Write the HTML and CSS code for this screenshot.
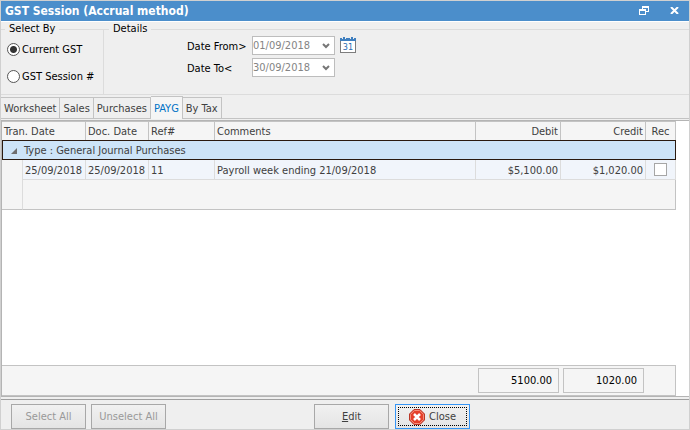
FILE: index.html
```html
<!DOCTYPE html>
<html lang="en">

<head>
    <meta charset="UTF-8">
    <meta name="viewport" content="width=device-width, initial-scale=1.0">
    <title>GST Session (Accrual method)</title>
    <link rel="stylesheet" href="styles.css">
</head>

<body>
    <div class="window">
        <header class="title-bar">
            <h1 class="title">GST Session (Accrual method)</h1>
            <button type="button" class="title-button" aria-label="Restore">
                <svg width="10" height="9" viewBox="0 0 10 9" fill="none" stroke="#fff" shape-rendering="crispEdges">
                    <path d="M3.5 3V.5h6v5H7M3 1.5h7" />
                    <path d="M.5 3.5h6v5h-6zM0 4.5h7" />
                </svg>
            </button>
            <button type="button" class="title-button" aria-label="Close window">
                <svg width="9" height="7" viewBox="0 0 9 7" stroke="#fff" stroke-width="2">
                    <path d="M1 0l7 7M8 0L1 7" />
                </svg>
            </button>
        </header>

        <form class="filters">
            <fieldset class="group select-by">
                <legend>Select By</legend>
                <label class="radio"><input type="radio" name="selectBy" checked> Current GST</label>
                <label class="radio"><input type="radio" name="selectBy"> GST Session #</label>
            </fieldset>
            <fieldset class="group details">
                <legend>Details</legend>
                <div class="date-grid">
                    <label for="dateFrom">Date From&gt;</label>
                    <select id="dateFrom" class="date-select" disabled>
                        <option>01/09/2018</option>
                    </select>
                    <button type="button" class="calendar-button" aria-label="Pick dates">
                        <svg width="16" height="17" viewBox="0 0 16 17">
                            <path d="M.5 3.5h15v12H.5z" fill="#fff" stroke="#7d7d7d" shape-rendering="crispEdges" />
                            <path d="M0 1h2v1h1V0h2v2h1V1h4v1h1V0h2v2h1V1h2v3H0z" fill="#3f7fbf" shape-rendering="crispEdges" />
                            <text x="8" y="13" class="calendar-day">31</text>
                        </svg>
                    </button>
                    <label for="dateTo">Date To&lt;</label>
                    <select id="dateTo" class="date-select" disabled>
                        <option>30/09/2018</option>
                    </select>
                </div>
            </fieldset>
        </form>

        <div class="tabs" role="tablist">
            <button type="button" class="tab" role="tab">Worksheet</button>
            <button type="button" class="tab" role="tab">Sales</button>
            <button type="button" class="tab" role="tab">Purchases</button>
            <button type="button" class="tab active" role="tab" aria-selected="true">PAYG</button>
            <button type="button" class="tab" role="tab">By Tax</button>
        </div>

        <main class="panel">
            <table class="ledger">
                <colgroup>
                    <col class="col-indent">
                    <col class="col-tran">
                    <col class="col-doc">
                    <col class="col-ref">
                    <col>
                    <col class="col-amount">
                    <col class="col-amount">
                    <col class="col-rec">
                </colgroup>
                <thead>
                    <tr>
                        <th colspan="2">Tran. Date</th>
                        <th>Doc. Date</th>
                        <th>Ref#</th>
                        <th>Comments</th>
                        <th class="amount">Debit</th>
                        <th class="amount">Credit</th>
                        <th class="center">Rec</th>
                    </tr>
                </thead>
                <tbody>
                    <tr class="group-row">
                        <td colspan="8">
                            <svg class="expander" width="6" height="6" viewBox="0 0 6 6">
                                <path d="M6 0v6H0z" fill="#6e6e6e" />
                            </svg>Type : General Journal Purchases
                        </td>
                    </tr>
                    <tr class="data-row">
                        <td class="indent"></td>
                        <td>25/09/2018</td>
                        <td>25/09/2018</td>
                        <td>11</td>
                        <td>Payroll week ending 21/09/2018</td>
                        <td class="amount">$5,100.00</td>
                        <td class="amount">$1,020.00</td>
                        <td class="center"><input type="checkbox" class="rec-check" aria-label="Rec"></td>
                    </tr>
                    <tr class="spacer-row">
                        <td class="indent"></td>
                        <td colspan="7"></td>
                    </tr>
                </tbody>
            </table>

            <div class="totals">
                <output class="total">5100.00</output>
                <output class="total">1020.00</output>
            </div>
        </main>

        <footer class="actions">
            <div class="action-group">
                <button type="button" class="button" disabled>Select All</button>
                <button type="button" class="button" disabled>Unselect All</button>
            </div>
            <div class="action-group main-actions">
                <button type="button" class="button"><span><u>E</u>dit</span></button>
                <button type="button" class="button focused">
                    <svg width="16" height="16" viewBox="0 0 16 16">
                        <path d="M5 .5h6L15.500 5v6L11 15.500H5L.5 11V5z" fill="#e5402b" stroke="#b93526" />
                        <path d="M5.400 1.500h5.200l3.900 3.900v5.200l-3.900 3.900H5.400l-3.900-3.900V5.400z" fill="none" stroke="#f58d78" />
                        <path d="M5 5l6 6M11 5l-6 6" stroke="#fff" stroke-width="2.500" />
                    </svg>
                    Close
                </button>
            </div>
        </footer>
    </div>
</body>

</html>
```

FILE: styles.css
```css
:root {
    --face: #efefef;
    --header: #f5f5f5;
    --line: #c3c3c3;
    --soft-line: #dcdcdc;
    --blue: #4b8ecb;
    --text: #404040;
}

* {
    margin: 0;
    padding: 0;
    box-sizing: border-box;
}

body,
button,
select,
input {
    font-family: Tahoma, "DejaVu Sans Condensed", "Noto Sans", sans-serif;
    font-size: 11px;
    line-height: 14px;
}

.window {
    display: flex;
    flex-direction: column;
    min-height: 100vh;
    border: 1px solid #d0d0d0;
    background: var(--face);
    color: var(--text);
}

/* Title bar */
.title-bar {
    display: flex;
    align-items: center;
    gap: 12px;
    height: 21px;
    padding: 0 6px 1px 4px;
    background: var(--blue);
    border-bottom: 1px solid #fff;
}

.title {
    flex: 1;
    font-size: 12px;
    line-height: 16px;
    font-weight: 700;
    color: #fff;
}

.title-button {
    display: flex;
    align-items: center;
    justify-content: center;
    width: 18px;
    height: 16px;
    border: none;
    background: none;
}

/* Filters */
.filters {
    display: flex;
    height: 73px;
    color: #000;
}

.group {
    min-width: 0;
    border: 1px solid var(--soft-line);
    border-width: 1px 0;
}

.group legend {
    padding: 0 4px;
}

.select-by {
    width: 103px;
    padding-left: 6px;
    border-right-width: 1px;
}

.select-by legend {
    margin-left: -2px;
}

.details {
    flex: 1;
}

.details legend {
    margin-left: 5px;
}

.radio {
    display: flex;
    align-items: center;
    gap: 2px;
    height: 27px;
    white-space: nowrap;
}

.radio input {
    appearance: none;
    flex: none;
    width: 13px;
    height: 13px;
    border: 1px solid #555;
    border-radius: 50%;
    background: #fff;
}

.radio input:checked {
    background: radial-gradient(circle, #333 3px, #fff 4px);
}

.date-grid {
    display: grid;
    grid-template-columns: 65px 83px 16px;
    align-items: center;
    row-gap: 3px;
    padding-left: 83px;
}

.date-grid label {
    padding-top: 2px;
}

.date-select {
    appearance: none;
    height: 19px;
    border: 1px solid #bdbdbd;
    border-radius: 0;
    background: #fff url("data:image/svg+xml,%3Csvg xmlns='http://www.w3.org/2000/svg' width='8' height='6'%3E%3Cpath d='M1 1l3 3 3-3' fill='none' stroke='%23777' stroke-width='2'/%3E%3C/svg%3E") no-repeat right 4px center;
    color: #848484;
    opacity: 1;
}

.calendar-button {
    margin-left: 5px;
    width: 16px;
    height: 17px;
    border: none;
    background: none;
}

.calendar-button svg {
    display: block;
}

.calendar-day {
    font-size: 9px;
    text-anchor: middle;
    fill: #2a6cb0;
}

/* Tabs */
.tabs {
    display: flex;
    align-items: flex-end;
    height: 24px;
    border-bottom: 1px solid var(--line);
}

.tab {
    height: 21px;
    padding: 2px 3px 0;
    border: 1px solid var(--line);
    border-width: 1px 1px 0 0;
    background: var(--face);
    color: var(--text);
}

.tab.active {
    height: 23px;
    margin-bottom: -1px;
    background: var(--header);
    color: #0072c6;
}

/* Ledger */
.panel {
    flex: 1;
    display: flex;
    flex-direction: column;
    justify-content: space-between;
    margin-top: 1px;
    padding-right: 13px;
    border: 1px solid #b4b4b4;
    border-right: none;
    background: #fff;
}

.ledger {
    width: 100%;
    table-layout: fixed;
    border-spacing: 0;
}

.col-indent { width: 21px; }
.col-tran { width: 63px; }
.col-doc { width: 63px; }
.col-ref { width: 66px; }
.col-amount { width: 85px; }
.col-rec { width: 30px; }

.ledger th,
.ledger td {
    padding: 2px 2px 0;
    text-align: left;
    white-space: nowrap;
}

.ledger th {
    height: 19px;
    border: 1px solid var(--line);
    border-left: none;
    border-bottom: none;
    background: var(--header);
    font-weight: 400;
}

.ledger .amount {
    text-align: right;
}

.ledger .center {
    padding-top: 0;
    text-align: center;
}

.ledger th.center {
    padding-top: 2px;
}

.ledger .group-row td {
    height: 20px;
    padding-left: 8px;
    border: 1px solid #2a1a10;
    background: #cde4f8;
}

.expander {
    margin-right: 7px;
}

.data-row td {
    height: 20px;
    border: 1px solid var(--soft-line);
    border-width: 0 1px 1px 0;
    background: #f1f5fb;
}

.spacer-row td {
    height: 30px;
    border-right: 1px solid var(--line);
    border-bottom: 1px solid var(--line);
    background: var(--header);
}

.ledger .indent {
    border-right: 1px solid var(--soft-line);
    background: var(--header);
}

.data-row .indent {
    border-bottom: none;
}

.rec-check {
    appearance: none;
    display: block;
    width: 13px;
    height: 13px;
    margin: 0 auto;
    border: 1px solid #a6a6a6;
    background: #fff;
}

.totals {
    display: flex;
    justify-content: flex-end;
    gap: 4px;
    padding: 2px 31px 2px 0;
    border: 1px solid var(--line);
    border-left: none;
    background: var(--header);
}

.total {
    width: 81px;
    padding: 5px 6px 4px 0;
    border: 1px solid var(--line);
    color: #000;
    text-align: right;
}

/* Buttons */
.actions {
    display: grid;
    grid-template-columns: 303px 1fr;
    margin-top: 2px;
    padding: 4px 10px 0;
    border-top: 1px solid #9f9f9f;
}

.action-group {
    display: flex;
    gap: 5px;
}

.main-actions {
    gap: 6px;
}

.button {
    display: flex;
    align-items: center;
    justify-content: center;
    gap: 4px;
    width: 75px;
    height: 25px;
    border: 1px solid #a8a8a8;
    background: linear-gradient(#f1f1f1, #e4e4e4);
    color: var(--text);
}

.button:disabled {
    color: #999;
}

.button.focused {
    border-color: #3595f5;
    outline: 1px dotted #000;
    outline-offset: -4px;
}
```
